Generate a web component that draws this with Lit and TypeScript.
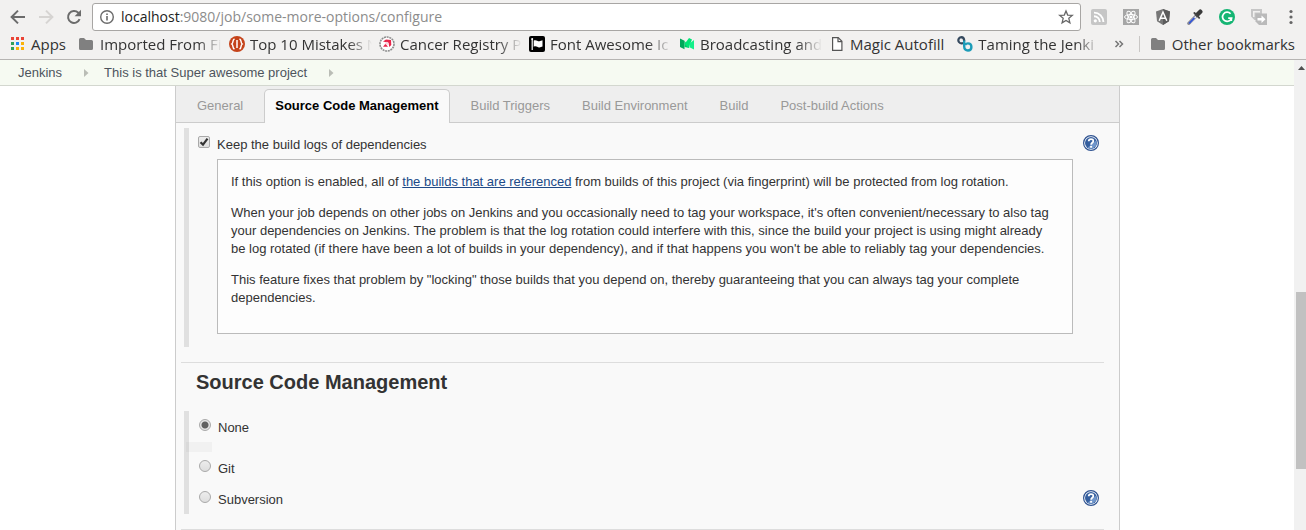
import { LitElement, html, svg, css, nothing, TemplateResult } from "lit";
import { customElement, property, state } from "lit/decorators.js";
import { classMap } from "lit/directives/class-map.js";

const draw = (size: number, label: string, body: unknown) => html`<svg
  width=${size} height=${size} viewBox="0 0 ${size} ${size}"
  role="img" aria-label=${label}>${body}</svg>`;

const icons: Record<string, TemplateResult> = {
  back: draw(18, "Back", svg`<path d="M16 9H3M9 2.6 2.6 9 9 15.4" fill="none" stroke="#6b6b6b" stroke-width="2"/>`),
  forward: draw(18, "Forward", svg`<path d="M2 9h13M9 2.6 15.4 9 9 15.4" fill="none" stroke="#d6d4d2" stroke-width="2"/>`),
  reload: draw(18, "Reload", svg`<path d="M14.6 11.2a6 6 0 1 1-1.3-6.5l1.3 1.3" fill="none" stroke="#6b6b6b" stroke-width="2"/><path d="M16 1.8v6.4H9.6z" fill="#6b6b6b"/>`),
  info: draw(16, "Site information", svg`<circle cx="8" cy="8" r="6.3" fill="none" stroke="#6b6b6b" stroke-width="1.4"/><path d="M7.2 7h1.6v4.6H7.2zM7.2 4.4h1.6v1.5H7.2z" fill="#6b6b6b"/>`),
  star: draw(16, "Bookmark", svg`<path d="M8 1.9 9.7 6.1 14.3 6.4 10.8 9.3 11.9 13.8 8 11.4 4.1 13.8 5.2 9.3 1.7 6.4 6.3 6.1z" fill="none" stroke="#666" stroke-width="1.3"/>`),
  rss: draw(16, "RSS", svg`<rect width="16" height="16" rx="2" fill="#c6c6c6"/><circle cx="4.3" cy="11.8" r="1.6" fill="#fff"/><path d="M3 7.2a5.8 5.8 0 0 1 5.8 5.8M3 3.6A9.4 9.4 0 0 1 12.4 13" fill="none" stroke="#fff" stroke-width="1.9"/>`),
  react: draw(16, "React", svg`<rect width="16" height="16" fill="#a6a6a6"/><g fill="none" stroke="#fff" stroke-width="1"><ellipse cx="8" cy="8" rx="6.5" ry="2.5"/><ellipse cx="8" cy="8" rx="6.5" ry="2.5" transform="rotate(60 8 8)"/><ellipse cx="8" cy="8" rx="6.5" ry="2.5" transform="rotate(120 8 8)"/></g><circle cx="8" cy="8" r="1.6" fill="#fff"/>`),
  angular: draw(16, "Angular", svg`<path d="M8 0 15 2.6 14 12.2 8 16 2 12.2 1 2.6z" fill="#777"/><path d="M8 0 15 2.6 14 12.2 8 16z" fill="#5c5c5c"/><path d="M4.2 11.7 8 3l3.8 8.7M5.8 9.2h4.4" fill="none" stroke="#fff" stroke-width="1.5"/>`),
  picker: draw(16, "Color picker", svg`<path d="M1.8 14.4 9.2 7" stroke="#8d8d95" stroke-width="3.2" stroke-linecap="round"/><path d="M3.2 13.4 9 7.6" stroke="#e6e9f5" stroke-width="1.6"/><path d="M2.6 13.8 7 9.4" stroke="#3557d6" stroke-width="1.8" stroke-linecap="round"/><path d="M10.5 5.5 13.3 2.7" stroke="#3a3a3a" stroke-width="4.4" stroke-linecap="round"/><path d="m7.4 4 4.8 4.8" stroke="#444" stroke-width="1.9" stroke-linecap="round"/>`),
  grammarly: draw(16, "Grammarly", svg`<circle cx="8" cy="8" r="8" fill="#15b573"/><path d="M11.6 4.8A4.6 4.6 0 1 0 12.5 9.2H9.2" fill="none" stroke="#fff" stroke-width="1.7"/><path d="M12.5 9v3" stroke="#fff" stroke-width="1.4"/>`),
  share: draw(16, "Share tab", svg`<path d="M0 0h11v5H5v6H3.5L0 7.5z" fill="#c6c6c6"/><path d="M2 2h7v1.5H3.5V8H2z" fill="#f2f1f0"/><path d="M4.5 4.5H16V16H8l-3.5-3.5z" fill="#bababa"/><path d="M6.5 9h4V6.5l4 3.8-4 3.8v-2.5h-4z" fill="#fff"/>`),
  menu: draw(16, "Menu", svg`<g fill="#666"><circle cx="8" cy="2.5" r="1.6"/><circle cx="8" cy="8" r="1.6"/><circle cx="8" cy="13.5" r="1.6"/></g>`),
  apps: draw(16, "", svg`<g><path d="M1 1h3v3H1zM6 1h3v3H6zM11 1h3v3h-3z" fill="#ea4335"/><path d="M1 6h3v3H1z" fill="#34a05a"/><path d="M6 6h3v3H6z" fill="#1e88f5"/><path d="M11 6h3v3h-3zM6 11h3v3H6zM11 11h3v3h-3z" fill="#fbb208"/><path d="M1 11h3v3H1z" fill="#34a05a"/></g>`),
  folder: draw(16, "", svg`<path d="M0 3.5Q0 2 1.5 2H5l2 2h5.5Q14 4 14 5.5v7q0 1.5-1.5 1.5h-11Q0 14 0 12.5z" fill="#808080"/>`),
  mistakes: draw(16, "", svg`<circle cx="8" cy="8" r="8" fill="#c5431a"/><path d="M5.5 2.8C3 4.2 4.8 6.5 2.8 8c2 1.5.2 3.8 2.7 5.2M10.5 2.8c2.5 1.4.7 3.7 2.7 5.2-2 1.5-.2 3.8-2.7 5.2M8 4v8" fill="none" stroke="#fff" stroke-width="1.5"/>`),
  cancer: draw(16, "", svg`<circle cx="8" cy="8" r="7" fill="#fff" stroke="#8c8c8c" stroke-width="1.6" stroke-dasharray="2 .7"/><path d="M4 5.6 7 3.5l5 .5.3 5-2 2-.8-4.3z" fill="#e8274b"/><path d="m4 10.8 2.5-3 2.5 3z" fill="#e8274b"/><circle cx="7.9" cy="7.2" r="1.5" fill="#fbd3dc"/>`),
  flag: draw(16, "", svg`<rect width="16" height="16" rx="2" fill="#000"/><path d="M3.2 3v11" stroke="#fff" stroke-width="1.2"/><circle cx="3.2" cy="3" r="1" fill="#fff"/><path d="M4.7 4.5c2.5-1.2 3.8.9 5.6.7 1.3-.1 2.2-.7 3.2-1v6.2c-1 .3-1.9.9-3.2 1-1.8.2-3.1-1.9-5.6-.6z" fill="#fff"/>`),
  medium: draw(16, "", svg`<path d="m1 2.5 4.5 2.3v8.4L1 11z" fill="#00a85a"/><path d="m5.5 4.8 5 7.2-5-1z" fill="#00c96b"/><path d="M5.5 8 10 2l3 1.6L9.5 12z" fill="#00e676"/><path d="M10.5 7.5 15 4v9.5l-4.5-2.3z" fill="#14f08a"/>`),
  page: draw(16, "", svg`<path d="M3.6 1.6h5.6l3.7 3.7v9.1H3.6z" fill="#fff" stroke="#555" stroke-width="1.2"/><path d="M9 1.6v4h4" fill="none" stroke="#555" stroke-width="1.2"/>`),
  taming: draw(16, "", svg`<path d="M7.2 6.2C5.5 8 3 7.6 1.9 6 .7 4.3 1.6 1.3 4.3 1.2 6.8 1.2 7.2 3 7.2 5" fill="none" stroke="#35495e" stroke-width="2.2"/><path d="M7.2 4.5v6c0 2.4 1.5 4 3.7 4 2 0 3.5-1.5 3.5-3.5 0-2.2-1.6-3.6-3.5-3.6-1.2 0-2 .4-2.7 1.2" fill="none" stroke="#1c9cb8" stroke-width="2.4"/>`),
  more: draw(16, "More bookmarks", svg`<path d="m4.5 5 3 3-3 3M8.5 5l3 3-3 3" fill="none" stroke="#777" stroke-width="1.5"/>`),
  help: draw(16, "Help", svg`<circle cx="8" cy="8" r="7.4" fill="#fff" stroke="#2f5391" stroke-width="1.2"/><circle cx="8" cy="8" r="6" fill="#355f9f"/><path d="M13.2 5.5A6 6 0 0 1 4.5 12.8z" fill="#6f95ca"/><path d="M5.7 6.3C5.8 3.3 10.4 3.4 10.3 6.1 10.2 7.8 8.1 7.8 8.1 9.8" fill="none" stroke="#fff" stroke-width="1.8"/><path d="M7.1 10.9h2v1.8h-2z" fill="#fff"/>`),
};

interface Bookmark { icon: string; text: string; faded?: boolean; }

const bookmarks: Bookmark[] = [
  { icon: "apps", text: "Apps" },
  { icon: "folder", text: "Imported From Fi", faded: true },
  { icon: "mistakes", text: "Top 10 Mistakes N", faded: true },
  { icon: "cancer", text: "Cancer Registry P", faded: true },
  { icon: "flag", text: "Font Awesome Ic", faded: true },
  { icon: "medium", text: "Broadcasting and", faded: true },
  { icon: "page", text: "Magic Autofill" },
  { icon: "taming", text: "Taming the Jenki", faded: true },
];

@customElement("browser-chrome")
export class BrowserChrome extends LitElement {
  static styles = css`
    :host { display: block; background: #f2f1f0; border-bottom: 1px solid #b6b4b2; color: #333; font: 14px/20px "Open Sans", "Noto Sans", sans-serif; }
    svg { display: block; flex: none; }
    button { display: block; padding: 0; border: 0; background: none; font: inherit; color: inherit; }
    .toolbar { display: flex; align-items: center; height: 34px; padding: 0 7px 0 9px; }
    .nav { display: flex; gap: 10px; margin-right: 9px; }
    .address { display: flex; flex: 1; align-items: center; gap: 6px; height: 26px; padding: 0 6px; border: 1px solid #a8a6a4; border-radius: 3px; background: #fff; }
    .field { position: relative; flex: 1; height: 20px; }
    .field input { width: 100%; height: 20px; padding: 0; border: 0; outline: 0; background: none; color: transparent; font: inherit; }
    .shown { position: absolute; inset: 0; color: #8c8c8c; pointer-events: none; white-space: nowrap; }
    .host { color: #222; }
    .extensions { display: flex; gap: 16px; margin-left: 10px; }
    .bookmarks { display: flex; align-items: center; height: 20px; padding: 0 11px 5px 10px; font-size: 15px; line-height: 24px; }
    .links { display: flex; flex: 1; gap: 13px; min-width: 0; }
    .link { display: flex; flex: none; align-items: center; gap: 5px; color: inherit; text-decoration: none; white-space: nowrap; }
    .faded { width: 122px; margin-right: -6px; mask-image: linear-gradient(90deg, #000 80%, transparent); }
    .more { margin-right: 12px; }
    .rest { padding-left: 11px; border-left: 1px solid #c9c7c5; height: 16px; }
  `;

  private link(b: Bookmark) {
    return html`<a class="link" href="#">${icons[b.icon]}<span class=${classMap({ faded: !!b.faded })}>${b.text}</span></a>`;
  }

  render() {
    return html`
      <div class="toolbar">
        <div class="nav">${["back", "forward", "reload"].map((n) => html`<button>${icons[n]}</button>`)}</div>
        <div class="address">
          ${icons.info}
          <div class="field">
            <input aria-label="Address" value="localhost:9080/job/some-more-options/configure" />
            <div class="shown" aria-hidden="true"><span class="host">localhost</span>:9080/job/some-more-options/configure</div>
          </div>
          <button>${icons.star}</button>
        </div>
        <div class="extensions">
          ${["rss", "react", "angular", "picker", "grammarly", "share", "menu"].map((n) => html`<button>${icons[n]}</button>`)}
        </div>
      </div>
      <nav class="bookmarks">
        <div class="links">${bookmarks.map((b) => this.link(b))}</div>
        <button class="more">${icons.more}</button>
        <div class="rest link">${this.link({ icon: "folder", text: "Other bookmarks" })}</div>
      </nav>`;
  }
}

@customElement("scroll-rail")
export class ScrollRail extends LitElement {
  @property({ type: Number }) before = 0;
  @property({ type: Number }) size = 1;
  @property({ type: Number }) after = 0;

  static styles = css`
    :host { display: flex; flex-direction: column; flex: none; width: 12px; background: #f1f1f1; }
    .arrow { display: block; margin: 6px 0 0 4px; }
    .top { flex-basis: 0; }
    .thumb { flex-basis: 0; margin-left: 2px; background: #c1c1c1; }
    .bottom { flex-basis: 0; }
  `;

  render() {
    return html`
      <div class="top" style="flex-grow:${this.before}">
        <svg class="arrow" width="7" height="4" viewBox="0 0 7 4"><path d="M0 4 3.5 0 7 4z" fill="#505050"/></svg>
      </div>
      <div class="thumb" style="flex-grow:${this.size}"></div>
      <div class="bottom" style="flex-grow:${this.after}"></div>`;
  }
}

@customElement("app-root")
export class AppRoot extends LitElement {
  @state() private active = "Source Code Management";
  @state() private scm = "None";

  static styles = css`
    :host { display: flex; flex-direction: column; height: 100vh; overflow: hidden; background: #fff; color: #333; font: 13px/18px "Liberation Sans", Arial, sans-serif; }
    svg { display: block; }
    browser-chrome { box-sizing: border-box; flex: none; height: 60px; }
    .viewport { display: flex; flex: 1; min-height: 0; }
    .page { flex: 1; min-width: 0; overflow: hidden; }
    .crumbs { display: flex; align-items: center; height: 25px; padding-left: 18px; border-bottom: 1px solid #d3d7cf; background: #f6faf2; }
    .crumb { color: #4d545d; text-decoration: none; }
    .sep { margin: 0 15px 0 22px; }
    .panel { margin: 0 174px 0 175px; border: 1px solid #ccc; border-width: 0 1px; background: #f9f9f9; }
    .tabs { display: flex; align-items: flex-end; gap: 10px; height: 36px; padding-left: 10px; border-bottom: 1px solid #ccc; background: #eee; }
    .tab { height: 34px; margin-bottom: -1px; padding: 0 10px 2px; border: 1px solid transparent; border-bottom: 0; border-radius: 5px 5px 0 0; background: none; color: #999; font: inherit; white-space: nowrap; }
    .on { border-color: #ccc; background: #f9f9f9; color: #000; font-weight: bold; }
    .body { padding: 5px 15px 0 5px; }
    .group { margin-left: 3px; border-left: 5px solid #e0e0e0; padding: 8px 5px 5px 9px; }
    .logs { padding-bottom: 13px; }
    .row { display: flex; justify-content: space-between; }
    .choice { display: flex; gap: 7px; }
    .help { height: 16px; padding: 0; border: 0; background: none; margin-top: -1px; }
    input { appearance: none; flex: none; box-sizing: border-box; width: 12px; height: 12px; margin: 0; border: 1px solid #a9a9a9; background: linear-gradient(#ededed, #dedede); }
    .check { border-radius: 2px; }
    .check:checked { background: url("data:image/svg+xml,%3Csvg xmlns='http://www.w3.org/2000/svg' viewBox='0 0 10 10'%3E%3Cpath d='M1.5 5.2 4 7.6 8.5 1.7' fill='none' stroke='%23333' stroke-width='2.2'/%3E%3C/svg%3E"), linear-gradient(#ededed, #dedede); }
    .radio { border-radius: 50%; }
    .radio:checked { background: radial-gradient(circle, #606060 3px, #e6e6e6 4px); }
    .note { margin: 5px 26px 0 19px; padding: 13px; border: 1px solid #bbb; background: #fdfdfd; }
    .note p { margin: 0 0 13px; }
    .note a { color: #204a87; }
    .rule { height: 0; margin: 15px 0 0; border: 0; border-top: 1px solid #ddd; }
    .title { margin: 7px 0 17px 15px; font-size: 20px; line-height: 24px; font-weight: bold; }
    .scm { padding-left: 10px; }
    .strip { width: 26px; height: 10px; margin: 5px 0 8px -13px; background: rgba(0, 0, 0, 0.03); }
    .next { margin-top: 13px; }
  `;

  private sep() {
    return html`<svg class="sep" width="5" height="8" viewBox="0 0 5 8"><path d="M0 0 4.5 4 0 8z" fill="#babdb6"/></svg>`;
  }

  private option(name: string, help = false, next = false) {
    return html`<div class=${classMap({ row: true, next })}>
      <label class="choice"><input class="radio" type="radio" name="scm" .checked=${this.scm === name} @change=${() => (this.scm = name)} />${name}</label>
      ${help ? html`<button class="help">${icons.help}</button>` : nothing}
    </div>`;
  }

  render() {
    const tabs = ["General", "Source Code Management", "Build Triggers", "Build Environment", "Build", "Post-build Actions"];
    return html`
      <browser-chrome></browser-chrome>
      <div class="viewport">
        <main class="page">
          <nav class="crumbs">
            <a class="crumb" href="#">Jenkins</a>${this.sep()}
            <a class="crumb" href="#">This is that Super awesome project</a>${this.sep()}
          </nav>
          <div class="panel">
            <div class="tabs">
              ${tabs.map((t) => html`<button class=${classMap({ tab: true, on: t === this.active })} @click=${() => (this.active = t)}>${t}</button>`)}
            </div>
            <div class="body">
              <section class="group logs">
                <div class="row">
                  <label class="choice"><input class="check" type="checkbox" checked />Keep the build logs of dependencies</label>
                  <button class="help">${icons.help}</button>
                </div>
                <div class="note">
                  <p>If this option is enabled, all of <a href="#">the builds that are referenced</a> from builds of this project (via fingerprint) will be protected from log rotation.</p>
                  <p>When your job depends on other jobs on Jenkins and you occasionally need to tag your workspace, it's often convenient/necessary to also tag your dependencies on Jenkins. The problem is that the log rotation could interfere with this, since the build your project is using might already be log rotated (if there have been a lot of builds in your dependency), and if that happens you won't be able to reliably tag your dependencies.</p>
                  <p>This feature fixes that problem by "locking" those builds that you depend on, thereby guaranteeing that you can always tag your complete dependencies.</p>
                </div>
              </section>
              <hr class="rule" />
              <h1 class="title">Source Code Management</h1>
              <section class="group scm">
                ${this.option("None")}
                <div class="strip"></div>
                ${this.option("Git")}
                ${this.option("Subversion", true, true)}
              </section>
              <hr class="rule" />
            </div>
          </div>
        </main>
        <scroll-rail before="232" size="177" after="61"></scroll-rail>
      </div>`;
  }
}
